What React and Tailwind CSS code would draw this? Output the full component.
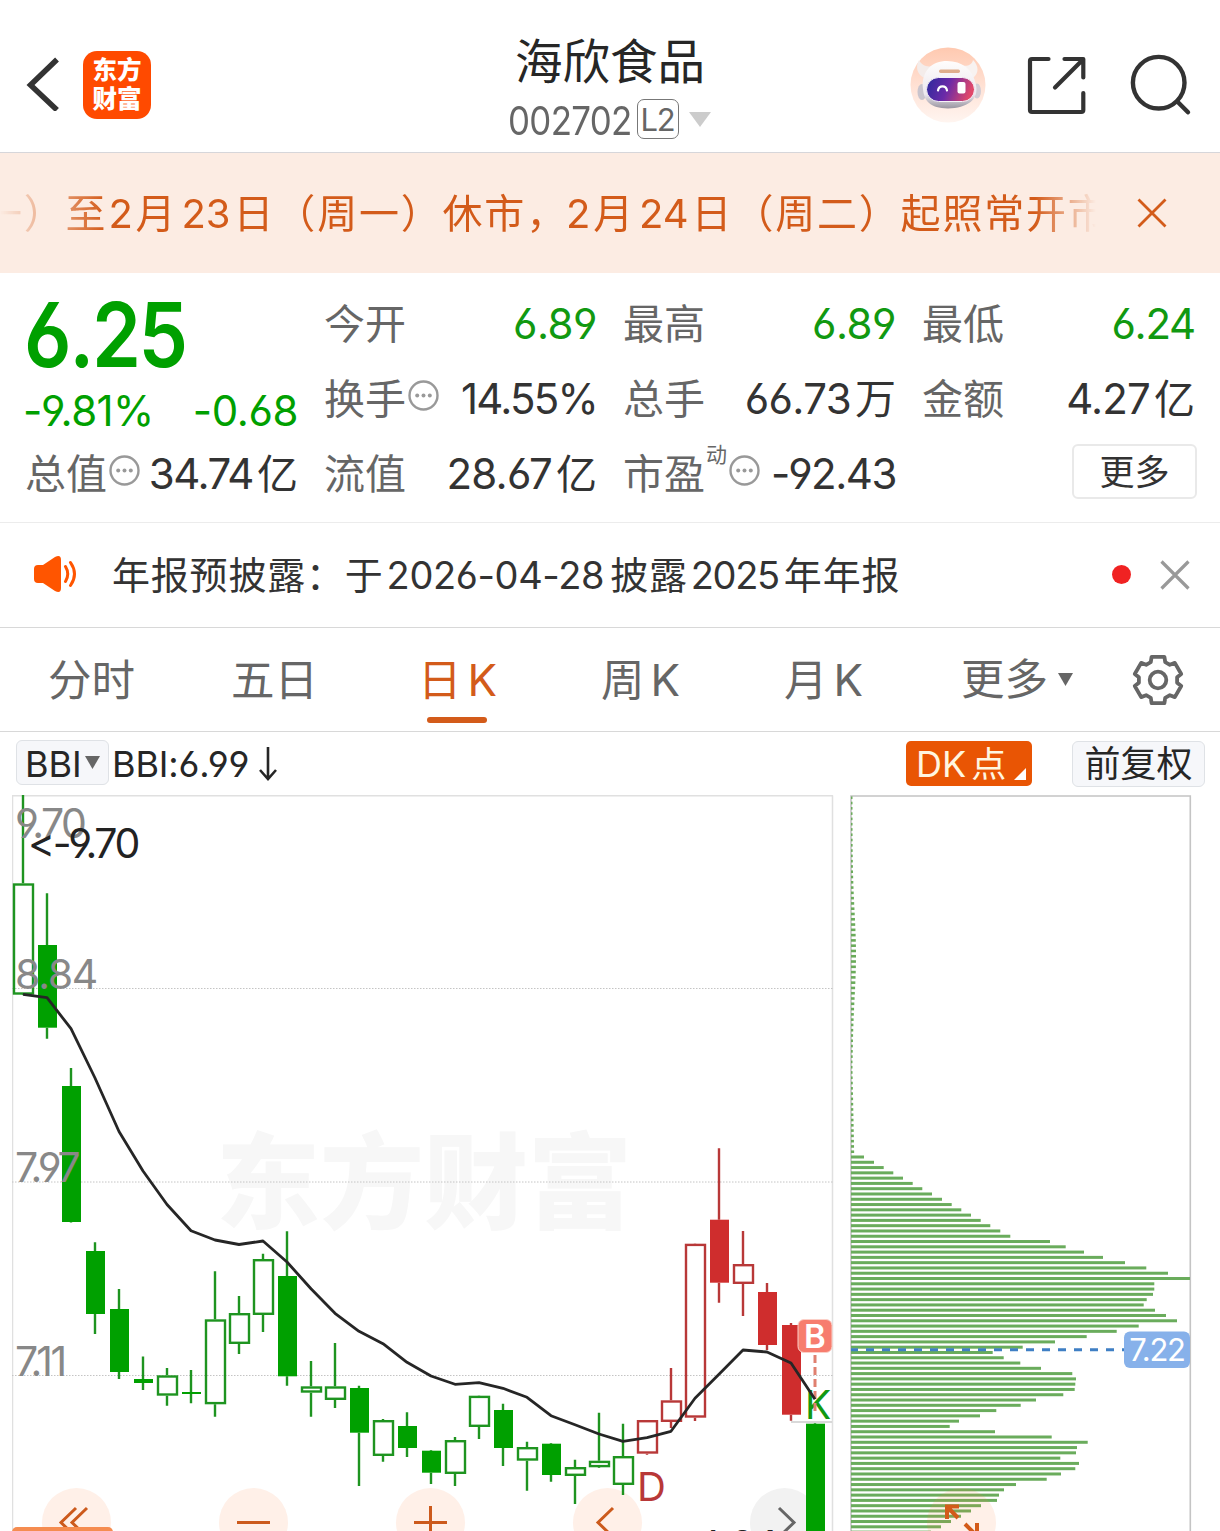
const GREEN = "#00a000";
const RED = "#cf2d2d";

// [open/close top, bottom, wick top, wick bottom, hollow, red]
const CANDLES = [
  [883.3, 994.7, 795, 994, 1, 0],
  [945, 1027.7, 893.3, 1038.7, 0, 0],
  [1086, 1222, 1068, 1222.5, 0, 0],
  [1251, 1314, 1242.3, 1334, 0, 0],
  [1309, 1372, 1289, 1379, 0, 0],
  [1379, 1383, 1356.5, 1390, 0, 0],
  [1375.3, 1395.7, 1368, 1405.7, 1, 0],
  [1392, 1394, 1370, 1403.3, 0, 0],
  [1319.3, 1404.3, 1271.3, 1416.7, 1, 0],
  [1313, 1344, 1296, 1354, 1, 0],
  [1259, 1315, 1253.7, 1332, 1, 0],
  [1276, 1376.3, 1231.3, 1385.7, 0, 0],
  [1386.3, 1392.7, 1361, 1416.7, 1, 0],
  [1386.3, 1400, 1343, 1408, 1, 0],
  [1388, 1432.7, 1385.7, 1486, 0, 0],
  [1420, 1456, 1419, 1461.7, 1, 0],
  [1426, 1448, 1412.3, 1457, 0, 0],
  [1450.7, 1472.7, 1450, 1484, 0, 0],
  [1440, 1474, 1437, 1486, 1, 0],
  [1395.7, 1427, 1396, 1439, 1, 0],
  [1410, 1448, 1403.7, 1466, 0, 0],
  [1447, 1460.7, 1441.7, 1490.7, 1, 0],
  [1443.7, 1475, 1443, 1481.7, 0, 0],
  [1467, 1476, 1459.7, 1504, 1, 0],
  [1460.7, 1467.3, 1412.7, 1468, 1, 0],
  [1456, 1485, 1423.7, 1495, 1, 0],
  [1420, 1453.7, 1421, 1454.7, 1, 1],
  [1400.3, 1422, 1368, 1428, 1, 1],
  [1243.7, 1417.7, 1244, 1421, 1, 1],
  [1219.7, 1282.7, 1148.3, 1302.7, 0, 1],
  [1264, 1284, 1231, 1316, 1, 1],
  [1292, 1345, 1283, 1350, 0, 1],
  [1325, 1414.7, 1323, 1420.7, 0, 1],
  [1423.7, 1540, 1423, 1540, 0, 0],
];

const BBI = [
  994.3, 997.7, 1028.7, 1078, 1131.5, 1171, 1204.5, 1230.7, 1240, 1244.5, 1241, 1262,
  1288.7, 1313.3, 1331.3, 1343.7, 1362.3, 1376, 1384.3, 1382.7, 1388.3, 1397.3, 1415.7,
  1424.7, 1434, 1441.3, 1437.7, 1431.3, 1398.3, 1374.3, 1350, 1352, 1363, 1399.3,
];

// chip distribution, bar lengths from y = 1157 downwards
const CHIPS = [
  13, 23, 32.7, 42.3, 52, 61.7, 71.3, 81, 91, 100.7, 110.3, 120, 129.7, 139.3, 149.3, 159.3,
  199, 214.7, 233, 252, 274, 295.3, 317, 339, 303.3, 303.3, 302, 295.7, 292.7, 304, 315, 326,
  287.7, 265.7, 235.7, 204, 171.7, 141.7, 152.7, 169.3, 190, 221.3, 225, 224.3, 223.7, 212.3,
  185, 169.7, 145.3, 129, 108, 98.7, 144, 200.7, 236.7, 226, 225, 209.3, 228, 224.3, 210,
  195.7, 165, 153, 148, 146, 130, 120, 110, 100, 90, 80,
];
const STEP = 5.283;

const candleX = (i) => 23 + i * 24;

const thinChip = (y) => {
  if (y < 1060) return 1.5 + 3.5 * Math.exp(-(((y - 955) / 60) ** 2));
  return 1.5 + Math.max(0, (y - 1070) / 50);
};

const gearPath = () => {
  const pts = [];
  for (let k = 0; k < 6; k++) {
    [[-22, 19.3], [-15.5, 24], [15.5, 24], [22, 19.3]].forEach(([d, r]) => {
      const a = ((k * 60 - 90 + d) * Math.PI) / 180;
      pts.push(`${(26 + r * Math.cos(a)).toFixed(2)} ${(26 + r * Math.sin(a)).toFixed(2)}`);
    });
  }
  return `M${pts.join("L")}Z`;
};

const Dots = () => (
  <svg className="ml-[2px] w-[31px] h-[31px] shrink-0 -mt-1.5" viewBox="0 0 31 31">
    <circle cx="15.5" cy="15.5" r="14" fill="none" stroke="#999" strokeWidth="2.4" />
    <circle cx="9.2" cy="15.5" r="2" fill="#999" />
    <circle cx="15.5" cy="15.5" r="2" fill="#999" />
    <circle cx="21.8" cy="15.5" r="2" fill="#999" />
  </svg>
);

const Robot = () => (
  <svg className="w-[76px] h-[76px]" viewBox="0 0 76 76">
    <defs>
      <linearGradient id="halo" x1="0" y1="0" x2="0" y2="1">
        <stop offset="0" stopColor="#ffc9b0" />
        <stop offset="0.6" stopColor="#ffe5da" />
        <stop offset="1" stopColor="#fff5f0" />
      </linearGradient>
      <linearGradient id="visor" x1="0" y1="0" x2="1" y2="0.2">
        <stop offset="0" stopColor="#2b2a9c" />
        <stop offset="0.5" stopColor="#6a2aa8" />
        <stop offset="1" stopColor="#e0486a" />
      </linearGradient>
      <linearGradient id="shell" x1="0" y1="0" x2="0" y2="1">
        <stop offset="0" stopColor="#fffdfc" />
        <stop offset="0.7" stopColor="#ece8ee" />
        <stop offset="1" stopColor="#98949f" />
      </linearGradient>
    </defs>
    <circle cx="38" cy="38" r="37.5" fill="url(#halo)" />
    <path d="M9 13C5 20 7 28 15 31L26 18C18 21 12 19 9 13Z" fill="#f4ecea" />
    <path d="M63 13C69 19 69 26 63 31L50 18C57 20 62 18 63 13Z" fill="#f8f2f0" />
    <ellipse cx="12" cy="45" rx="4.5" ry="8" fill="#c9c4cd" />
    <ellipse cx="67" cy="44" rx="4" ry="7.5" fill="#d2ccd4" />
    <path d="M13 42C11 24 22 14 37 14C52 14 63 22 66 38C69 53 57 61 38 61.500C20 61 14 54 13 42Z" fill="url(#shell)" />
    <rect x="29" y="22.5" width="21" height="3.5" rx="1.7" fill="#dfae8c" />
    <rect x="16.5" y="30.5" width="48" height="24" rx="12" fill="url(#visor)" stroke="#f6f2f8" strokeWidth="1" />
    <path d="M28 43.500C29 38 36 38 37 43.500" fill="none" stroke="#fff" strokeWidth="2.2" strokeLinecap="round" />
    <rect x="47.5" y="35" width="8" height="11.5" rx="2" fill="#fff" />
  </svg>
);

const Header = () => (
  <header className="h-[153px] border-b border-[#d6d6da] flex items-start justify-between">
    <div className="flex items-start pl-6 pt-[51px] w-[400px]">
      <svg className="w-9 h-[60px]" viewBox="0 0 36 60" fill="none" stroke="#333" strokeWidth="5.5">
        <path d="M33 8.500L6.500 34L33 59" strokeLinejoin="miter" />
      </svg>
      <div className="ml-[23px] w-[68px] h-[68px] rounded-[14px] bg-[#ff4a00] text-white font-black text-[24.5px] leading-[28.5px] text-center pt-[5px]">
        东方
        <br />
        财富
      </div>
    </div>
    <div className="flex flex-col items-center w-[420px]">
      <h1 className="text-[47.5px] leading-[60px] mt-[32px] text-[#262626]">海欣食品</h1>
      <div className="flex items-center h-[40px] mt-[7px] -ml-[2px]">
        <span className="w-[124px] text-[39px] leading-[40px] text-[#666] tracking-[-0.02em] whitespace-nowrap origin-left scale-x-[0.895] pt-[3px]">002702</span>
        <span className="ml-[5px] w-[42px] h-[40px] rounded-[7px] border-[1.5px] border-[#777] text-[#666] text-[31px] leading-[39px] text-center tracking-[-0.04em]">
          L2
        </span>
        <svg className="ml-[10px] w-[22px] h-[15px]" viewBox="0 0 22 15">
          <path d="M0 0H22L11 15Z" fill="#ccc" />
        </svg>
      </div>
    </div>
    <div className="flex w-[400px] justify-end pt-[47px] pr-[28px]">
      <Robot />
      <svg className="ml-[40px] mt-[8px] w-[62px] h-[62px]" viewBox="1026 55 62 62" fill="none" stroke="#333" strokeWidth="4.2" strokeLinecap="round" strokeLinejoin="round">
        <path d="M1048.500 59H1032Q1030 59 1030 61V110Q1030 112 1032 112H1081.300Q1083.300 112 1083.300 110V93" />
        <path d="M1064.500 59H1083.300V77.500M1055 87.500L1082 60.500" />
      </svg>
      <svg className="ml-[42px] mt-[6px] w-[62px] h-[64px]" viewBox="1130 53 62 64" fill="none" stroke="#333" strokeWidth="4.4" strokeLinecap="round">
        <circle cx="1158.7" cy="82.7" r="25.8" />
        <path d="M1177.300 101.500L1188 112.300" />
      </svg>
    </div>
  </header>
);

const Banner = () => (
  <div className="h-[120px] bg-[#fcece3] flex items-center text-[#d35b1a]">
    <div className="w-[1096px] overflow-hidden [mask-image:linear-gradient(to_right,transparent,black_105px,black_1035px,transparent)]">
      <p className="-ml-[18px] mt-[2px] whitespace-nowrap text-[40px] leading-[60px] tracking-[1.8px]">
        一）至<span className="mx-px">2</span>月<span className="ml-[4px] tracking-normal mr-[3px]">23</span>日（周一）休市
        <span className="-mr-[3px]">，</span>
        <span className="mx-px">2</span>月<span className="ml-[4px] tracking-normal mr-[3px]">24</span>日（周二）起照常开市
      </p>
    </div>
    <svg className="ml-[41px] w-[30px] h-[30px]" viewBox="0 0 30 30" stroke="#d35b1a" strokeWidth="2.8">
      <path d="M1.500 1.500L28.500 28.500M28.500 1.500L1.500 28.500" />
    </svg>
  </div>
);

const Stat = ({ label, value, unit, color = "text-[#333]", spacing = "tracking-[-0.03em]", more, sup }) => (
  <div className="flex items-center h-[75px] leading-[50px]">
    <span className="text-[41px] text-[#666]">{label}</span>
    {sup && <span className="text-[21px] text-[#666] -mt-[38px] leading-[24px] ml-px">{sup}</span>}
    {more && <Dots />}
    <span className={`ml-auto text-[42px] whitespace-nowrap ${spacing} ${color}`}>{value}</span>
    {unit && <span className="text-[41px] text-[#333] ml-[4px]">{unit}</span>}
  </div>
);

const Quote = () => (
  <section className="h-[250px] border-b border-[#ececec] px-[25px] pt-[13px] grid grid-cols-4 gap-x-[26px]">
    <div>
      <div className="h-[150px] text-[#00a000]">
        <div className="text-[90px] leading-[98px] font-semibold tracking-[-0.03em] origin-left scale-x-[0.875] -ml-px">6.25</div>
        <div className="flex justify-between text-[42px] leading-[54px] whitespace-nowrap">
          <span className="tracking-[-0.015em] -ml-[2px]">-9.81%</span>
          <span className="tracking-[-0.01em]">-0.68</span>
        </div>
      </div>
      <Stat label="总值" value="34.74" unit="亿" spacing="tracking-[-0.035em]" more />
    </div>
    <div>
      <Stat label="今开" value="6.89" color="text-[#119911]" spacing="tracking-[-0.012em]" />
      <Stat label="换手" value="14.55%" spacing="tracking-[-0.042em]" more />
      <Stat label="流值" value="28.67" unit="亿" spacing="tracking-[-0.018em]" />
    </div>
    <div>
      <Stat label="最高" value="6.89" color="text-[#119911]" spacing="tracking-[-0.012em]" />
      <Stat label="总手" value="66.73" unit="万" spacing="tracking-[-0.015em]" />
      <Stat label="市盈" value="-92.43" spacing="tracking-[-0.035em]" sup="动" more />
    </div>
    <div>
      <Stat label="最低" value="6.24" color="text-[#119911]" />
      <Stat label="金额" value="4.27" unit="亿" spacing="tracking-[-0.02em]" />
      <div className="flex justify-end h-[75px] items-center">
        <button className="w-[125px] h-[55px] -mr-[2px] -mt-[4px] rounded-[6px] border-2 border-[#e9e9e9] text-[35px] leading-[52px] text-[#333]">更多</button>
      </div>
    </div>
  </section>
);

const Notice = () => (
  <div className="h-[105px] border-b border-[#d8d8d8] flex items-center pl-[33px] pr-[30px]">
    <svg className="w-[46px] h-[38px] -mt-[2px]" viewBox="0 0 46 38" fill="#ff5500">
      <path d="M1 14Q1 10 5 10H10L22 2Q28-1 28 5V33Q28 39 22 36L10 28H5Q1 28 1 24Z" />
      <path d="M32.500 11.500Q37 19 32.500 26.500M37.500 7.500Q45.500 19 37.500 30.500" fill="none" stroke="#ff5500" strokeWidth="3" strokeLinecap="round" />
    </svg>
    <p className="ml-[33px] -mt-px text-[38px] leading-[60px] text-[#333] tracking-[0.8px] whitespace-nowrap">
      年报预披露：于<span className="tracking-[-0.01em] ml-[3px] mr-[6px]">2026-04-28</span>披露
      <span className="tracking-[-0.035em] ml-[3px] mr-[5px]">2025</span>年年报
    </p>
    <span className="ml-auto w-[19px] h-[19px] rounded-full bg-[#f02222] -mt-px" />
    <svg className="ml-[29px] w-[30px] h-[30px] -mt-px" viewBox="0 0 30 30" stroke="#999" strokeWidth="3.2">
      <path d="M1.500 1.500L28.500 28.500M28.500 1.500L1.500 28.500" />
    </svg>
  </div>
);

const TABS = [["分时"], ["五日"], ["日", "K"], ["周", "K"], ["月", "K"]];

const Tabs = () => (
  <nav className="h-[104px] border-b border-[#d8d8d8] flex text-[43.5px] leading-[105px] text-[#666]">
    {TABS.map(([a, b]) => (
      <div key={a} className={`relative w-[183px] flex justify-center ${a === "日" ? "text-[#d35b1a]" : ""}`}>
        <span>{a}</span>
        {b && <span className="ml-[6px] text-[44px]">{b}</span>}
        {a === "日" && <span className="absolute top-[89px] left-[61px] w-[60px] h-[6px] rounded-full bg-[#d35b1a]" />}
      </div>
    ))}
    <div className="flex items-center ml-[46px]">
      <span>更多</span>
      <svg className="ml-[10px] w-[15px] h-[13px]" viewBox="0 0 15 13">
        <path d="M0 0H15L7.500 13Z" fill="#666" />
      </svg>
    </div>
    <svg className="ml-[59px] mt-[26px] w-[52px] h-[52px]" viewBox="0 0 52 52" fill="none" stroke="#666" strokeWidth="3.8" strokeLinejoin="round">
      <path d={gearPath()} />
      <circle cx="26" cy="26" r="8.3" />
    </svg>
  </nav>
);

const Toolbar = () => (
  <div className="h-[63px] flex items-start pt-[9px] pl-[16px] pr-[15px] text-[36px] leading-[43px] text-[#262626]">
    <div className="w-[93px] h-[45px] -mt-px rounded-[6px] border border-[#dfe2e6] bg-[#f6f7fa] flex items-center pl-[8px]">
      <span className="pt-[3px]">BBI</span>
      <svg className="ml-[3px] w-[15px] h-[13px]" viewBox="0 0 15 13">
        <path d="M0 0H15L7.500 13Z" fill="#666" />
      </svg>
    </div>
    <span className="ml-[3px] mt-[2px] tracking-[-0.004em]">BBI:6.99</span>
    <svg className="ml-[10px] mt-[6px] w-[18px] h-[34px]" viewBox="0 0 18 34" fill="none" stroke="#262626" strokeWidth="2.6">
      <path d="M9 0V32M1 23L9 32L17 23" />
    </svg>
    <div className="relative ml-auto w-[126px] h-[45px] rounded-[5px] bg-[#e95504] text-[#fff6e0] pl-[10px] leading-[46px]">
      <span>DK</span>
      <span className="ml-[5px] text-[35px]">点</span>
      <svg className="absolute right-[6px] bottom-[6px] w-[12px] h-[12px]" viewBox="0 0 12 12">
        <path d="M12 0V12H0Z" fill="#fff" />
      </svg>
    </div>
    <div className="ml-[40px] w-[133px] h-[46px] rounded-[6px] border border-[#dfe2e6] bg-[#f6f7fa] text-center text-[36px] leading-[45px]">前复权</div>
  </div>
);

const RoundButton = ({ className, children, stroke = "#cc5a1c" }) => (
  <button className={`absolute top-[693px] w-[69px] h-[69px] rounded-full ${className}`}>
    <svg className="w-[69px] h-[69px]" viewBox="0 0 69 69" fill="none" stroke={stroke} strokeWidth="3">
      {children}
    </svg>
  </button>
);

const KLine = () => (
  <svg className="relative w-[822px] h-[736px] shrink-0" viewBox="12 795 822 736">
    <text x="216" y="1221" fontSize="104" fontWeight="900" fill="#f7f7f7">东方财富</text>
    <path d="M12.500 1531V795.500M832.500 1531V795.500" stroke="#e0e0e0" strokeWidth="1.5" />
    <path d="M12 795.700H833" stroke="#e0e0e0" strokeWidth="1.5" />
    {[988.5, 1182, 1375.5].map((y) => (
      <path key={y} d={`M12 ${y}H833`} stroke="#c4c4c4" strokeWidth="1" strokeDasharray="1.5 1.5" />
    ))}
    <path d="M791 1422H832" stroke="#ccc" strokeWidth="1.5" />
    {CANDLES.map(([top, bottom, high, low, hollow, red], i) => {
      const x = candleX(i);
      const color = red ? RED : GREEN;
      const line = red ? "#b83838" : "#1e9420";
      return (
        <g key={i}>
          <path d={`M${x} ${high}V${top}M${x} ${bottom}V${low}`} stroke={line} strokeWidth="2.4" />
          {hollow ? (
            <rect x={x - 9} y={top + 1.2} width="19" height={bottom - top - 2.4} fill="none" stroke={line} strokeWidth="2.4" />
          ) : (
            <rect x={x - 9} y={top} width="19" height={bottom - top} fill={color} />
          )}
        </g>
      );
    })}
    <g fill="#888" fontSize="41" letterSpacing="-2.5">
      <text x="15" y="838">9.70</text>
      <text x="15" y="989" letterSpacing="-1.3">8.84</text>
      <text x="15" y="1182">7.97</text>
      <text x="15" y="1376">7.11</text>
    </g>
    <text x="28" y="858" fontSize="41" letterSpacing="-2.5" fill="#222">&lt;-9.70</text>
    <text x="698" y="1560" fontSize="41" letterSpacing="-1.8" fill="#222">6.24-&gt;</text>
    <text x="637" y="1501" fontSize="40" fill="#b83838">D</text>
    <text x="805" y="1419" fontSize="39" fill="#119911">K</text>
    <path d="M815 1355V1411" stroke="#e08070" strokeWidth="3" strokeDasharray="8 4" />
    <polyline points={BBI.map((y, i) => `${candleX(i)},${y}`).join(" ")} fill="none" stroke="#262626" strokeWidth="2.8" strokeLinejoin="round" />
    <rect x="798" y="1319.5" width="34" height="33" rx="6" fill="#f77d6e" stroke="#fbd0c8" strokeWidth="1" />
    <text x="815" y="1347.5" fontSize="33" fontWeight="600" fill="#fff" textAnchor="middle">B</text>
  </svg>
);

const ChipChart = () => {
  const thin = [];
  for (let y = 1157 - STEP; y > 797; y -= STEP) thin.push(y);
  return (
    <svg className="w-[342px] h-[736px] shrink-0" viewBox="850 795 342 736">
      <path d="M851 1531V796H1190.300V1531" fill="none" stroke="#c4c4c4" strokeWidth="1.6" />
      {thin.map((y) => (
        <rect key={y} x="851" y={y - 1.3} width={thinChip(y)} height="2.6" fill="#6aaa5a" />
      ))}
      {CHIPS.map((w, i) => (
        <rect key={i} x="851" y={1157 + i * STEP - 1.5} width={w} height="3" fill="#6aac5c" />
      ))}
      <path d="M851 1349.700H1124" stroke="#3f7fc4" strokeWidth="3" strokeDasharray="8 8" strokeDashoffset="1" />
      <rect x="1124" y="1331.5" width="66" height="36.5" rx="6" fill="#87b1ea" />
      <text x="1157" y="1361" fontSize="31" letterSpacing="-1.2" fill="#fff" textAnchor="middle">7.22</text>
    </svg>
  );
};

const Chart = () => (
  <div className="relative flex pl-[12px] h-[736px] overflow-hidden">
    <RoundButton className="left-[42px] bg-[#fff0e8]">
      <path d="M34 20L19 34.500L34 49M45 20L30 34.500L45 49" />
    </RoundButton>
    <RoundButton className="left-[219px] bg-[#fff0e8]">
      <path d="M18 34.500H51" />
    </RoundButton>
    <RoundButton className="left-[396px] bg-[#fff0e8]">
      <path d="M18 34.500H51M34.500 18V51" />
    </RoundButton>
    <RoundButton className="left-[573px] bg-[#fff0e8]">
      <path d="M40 20L25 34.500L40 49" />
    </RoundButton>
    <RoundButton className="left-[750px] bg-[#f2f2f2]" stroke="#666">
      <path d="M29 20L44 34.500L29 49" />
    </RoundButton>
    <KLine />
    <div className="ml-[16px]">
      <ChipChart />
    </div>
    <RoundButton className="left-[927px] bg-[#ff8040]/[0.12]" stroke="#d35b1a">
      <path d="M20 31V18.500H32M20.500 19L31 30" strokeWidth="4" />
      <path d="M50 35V48H38M49 47L38 36" strokeWidth="4" />
    </RoundButton>
    <div className="absolute left-[12px] top-[732px] w-[101px] h-[12px] rounded-t-[5px] bg-[#f58c50]" />
  </div>
);

const App = () => (
  <div className="w-[1220px] h-[1531px] overflow-hidden bg-white font-['Inter','Noto_Sans_CJK_SC',sans-serif] [font-feature-settings:'cv03','cv04']">
    <Header />
    <Banner />
    <Quote />
    <Notice />
    <Tabs />
    <Toolbar />
    <Chart />
  </div>
);

export default App;
